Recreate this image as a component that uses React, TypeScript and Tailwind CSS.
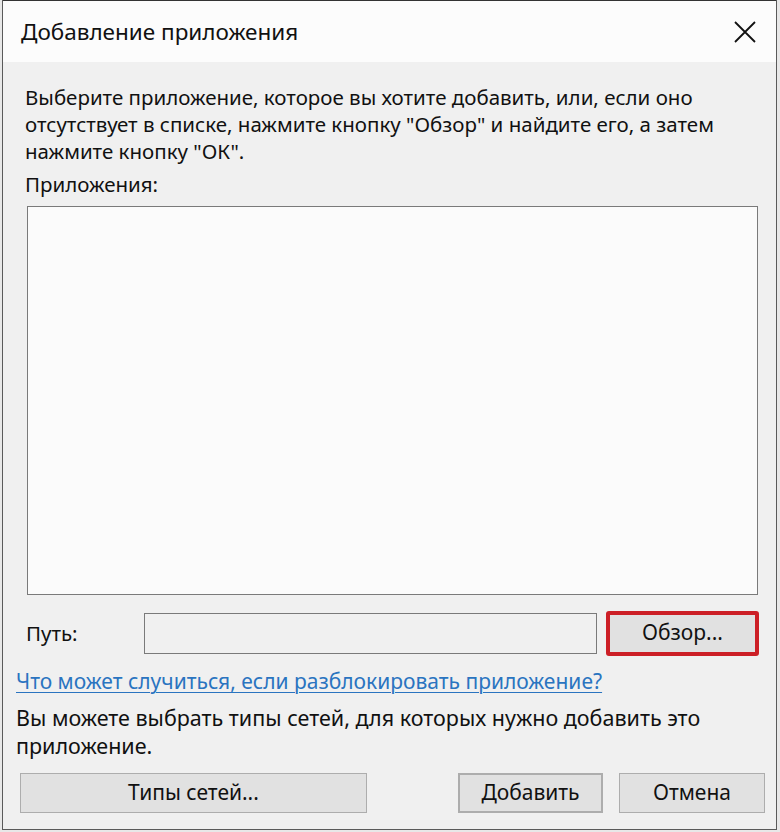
const font = { fontFamily: '"Noto Sans", "Open Sans", sans-serif' };

const Btn: React.FC<{ label: string; className?: string }> = ({ label, className }) => (
  <button
    className={
      "h-10 bg-[#e1e1e1] border border-[#adadad] text-[21px] text-[#111] flex items-center justify-center " +
      (className ?? "")
    }
  >
    {label}
  </button>
);

export default function App() {
  return (
    <div className="w-[780px] h-[832px] bg-[#e8e8e8] overflow-hidden" style={font}>
      <div className="ml-[2px] w-[775px] h-[830px] border-x border-b border-[#5a5a5a] bg-[#f0f0f0] flex flex-col">
        {/* title bar */}
        <div className="h-[62px] bg-[#fcfcfc] flex items-center justify-between pl-[18px] pr-[20px] border-t border-[#333]">
          <span className="text-[22.5px] text-[#111]">Добавление приложения</span>
          <svg width="22" height="22" viewBox="0 0 22 22">
            <path d="M1 1 L21 21 M21 1 L1 21" stroke="#111" strokeWidth="1.8" />
          </svg>
        </div>

        {/* body */}
        <div className="flex-1 flex flex-col pt-[22px]">
          <p className="pl-[22px] pr-[10px] text-[20.5px] leading-[27px] text-[#111]">
            Выберите приложение, которое вы хотите добавить, или, если оно отсутствует в списке, нажмите кнопку
            "Обзор" и найдите его, а затем нажмите кнопку "ОК".
          </p>
          <div className="pl-[22px] mt-[6px] text-[20.5px] leading-[27px] text-[#111]">Приложения:</div>
          <div className="ml-[24px] mt-[8px] w-[731px] h-[389px] border border-[#7a7a7a] bg-[#fbfbfb]" />

          <div className="flex items-center mt-[16px] h-[44px]">
            <span className="pl-[23px] w-[141px] text-[20.5px] text-[#111]">Путь:</span>
            <div className="w-[453px] h-[41px] border border-[#7a7a7a] bg-[#f0f0f0]" />
            <div className="ml-[9px] w-[153px] h-[45px] rounded-[3px] border-[4px] border-[#cc1f26]">
              <Btn label="Обзор..." className="w-full h-full border-0" />
            </div>
          </div>

          <a className="pl-[13px] mt-[12px] text-[21px] leading-[28px] text-[#2a74c0] underline underline-offset-[3px] decoration-[1px] w-fit">
            Что может случиться, если разблокировать приложение?
          </a>

          <p className="pl-[13px] mt-[9px] text-[21.5px] leading-[28px] text-[#111]">
            Вы можете выбрать типы сетей, для которых нужно добавить это
            <br />
            приложение.
          </p>

          <div className="flex mt-[13px] pl-[17px]">
            <Btn label="Типы сетей..." className="w-[347px]" />
            <Btn label="Добавить" className="ml-[91px] w-[145px] border-2 border-[#1a70b8]" />
            <Btn label="Отмена" className="ml-[16px] w-[146px]" />
          </div>
        </div>
      </div>
    </div>
  );
}
